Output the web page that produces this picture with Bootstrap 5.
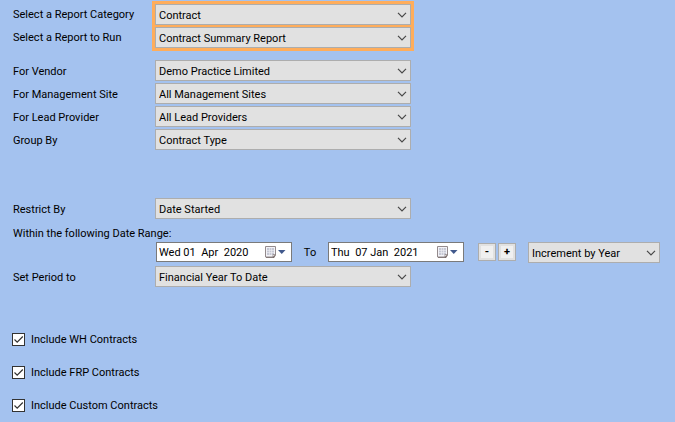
<!DOCTYPE html>
<html lang="en">
<head>
<meta charset="utf-8">
<meta name="viewport" content="width=device-width, initial-scale=1">
<title>Reports</title>
<link href="https://cdn.jsdelivr.net/npm/bootstrap@5.3.0/dist/css/bootstrap.min.css" rel="stylesheet">
<style>
body{background:#a4c2ef;color:#000;font:11px/21px Roboto,"Liberation Sans",sans-serif}
.report-form{padding:1px 13px 8px}
.stack{display:grid;gap:2px}
.caption{flex:0 0 142px;line-height:21px}
label.caption{height:21px;line-height:23px}
.field{flex:0 1 256px;min-width:0}
.highlight{flex:0 1 262px;min-width:0;background:#ffad5b;padding:3px}
.first-group{margin-bottom:9px}
.first-group .caption{flex-basis:139px;padding-top:3px}
.group-gap{margin-bottom:48px}
.form-select{height:21px;padding:2px 20px 0 3px;border:1px solid #adadad;border-radius:0;color:#000;font-size:11px;line-height:17px;background-color:#e1e1e1;background-image:url("data:image/svg+xml,%3Csvg xmlns='http://www.w3.org/2000/svg' viewBox='0 0 10 6'%3E%3Cpath d='M1 .8 5 4.8 9 .8' fill='none' stroke='%23484848' stroke-width='1.2'/%3E%3C/svg%3E");background-size:10px 6px;background-position:right 3px center}
.range-title{padding-top:6px;line-height:17px}
.date-row{margin:0 0 3px 143px;height:21px}
.date-box{flex:0 1 136px;min-width:0;height:20px;background:#fff;border:1px solid #7a7a7a}
.date-box input{flex:1 1 0;min-width:0;border:0;outline:0;padding:0 0 0 2px;height:18px;background:none;color:#000}
.date-box button{flex:none;border:0;background:none;padding:0 5px 0 0;height:18px;line-height:0}
.to-word{flex:0 0 36px;text-align:center}
.steps{margin:1px 12px 0 14px;gap:2px}
.steps button{width:18px;height:18px;padding:0;border:1px solid #adadad;border-radius:0;background:#f0f0f0;box-shadow:inset 0 0 0 2px #e1e1e1;color:#000;font-size:11px;font-weight:700;line-height:16px}
.increment{flex:0 1 132px;min-width:0}
.checks{margin-top:42px;gap:12px}
.checks .form-check{min-height:21px;margin:0;padding:0;display:flex;align-items:center;gap:6px}
.checks .form-check-input{float:none;margin:0 0 0 -1px;width:13px;height:13px;border:1px solid #333;border-radius:0;background-color:#fff}
.checks .form-check-input:checked{border-color:#333;background-color:#fff;background-size:11px 11px;background-image:url("data:image/svg+xml,%3Csvg xmlns='http://www.w3.org/2000/svg' viewBox='0 0 11 11'%3E%3Cpath d='M1.5 5.5 4.2 8.2 9.8 2.5' fill='none' stroke='%23333' stroke-width='1.2'/%3E%3C/svg%3E")}
</style>
<script defer src="https://cdn.jsdelivr.net/npm/bootstrap@5.3.0/dist/js/bootstrap.bundle.min.js"></script>
</head>
<body>
<svg class="d-none" aria-hidden="true">
<symbol id="calendar" viewBox="0 0 21 12">
<path d="M1 1H11V9L9 12H1Z" fill="#776a68"/>
<path d="M.5.5H10.500V8.500L8 11H.5Z" fill="#f3f3f8" stroke="#938a8c"/>
<path d="M2 2H9V9H2Z" fill="#c6c8d4"/>
<path d="M2 4.500H9M2 6.500H9M4.500 2V9M6.500 2V9" stroke="#eeeef4" stroke-width=".6"/>
<path d="M8 11V8.500H10.500Z" fill="#fff" stroke="#776a68" stroke-width=".6"/>
<path d="M13 4H20.500L16.750 8Z" fill="#41598c"/>
</symbol>
</svg>
<form class="report-form">
<div class="first-group d-flex">
<div class="stack caption align-content-start">
<label for="category">Select a Report Category</label>
<label for="report">Select a Report to Run</label>
</div>
<div class="highlight stack">
<select class="form-select" id="category"><option>Contract</option></select>
<select class="form-select" id="report"><option>Contract Summary Report</option></select>
</div>
</div>
<div class="stack group-gap">
<div class="d-flex"><label class="caption" for="vendor">For Vendor</label><div class="field"><select class="form-select" id="vendor"><option>Demo Practice Limited</option></select></div></div>
<div class="d-flex"><label class="caption" for="site">For Management Site</label><div class="field"><select class="form-select" id="site"><option>All Management Sites</option></select></div></div>
<div class="d-flex"><label class="caption" for="lead-provider">For Lead Provider</label><div class="field"><select class="form-select" id="lead-provider"><option>All Lead Providers</option></select></div></div>
<div class="d-flex"><label class="caption" for="group-by">Group By</label><div class="field"><select class="form-select" id="group-by"><option>Contract Type</option></select></div></div>
</div>
<div class="d-flex"><label class="caption" for="restrict">Restrict By</label><div class="field"><select class="form-select" id="restrict"><option>Date Started</option></select></div></div>
<div class="range-title" id="range-title">Within the following Date Range:</div>
<div class="date-row d-flex" role="group" aria-labelledby="range-title">
<div class="date-box d-flex"><input type="text" id="from" aria-label="From date" value="Wed 01  Apr  2020"><button type="button" aria-label="Choose from date"><svg width="21" height="12"><use href="#calendar"/></svg></button></div>
<label class="to-word" for="until">To</label>
<div class="date-box d-flex"><input type="text" id="until" value="Thu  07 Jan  2021"><button type="button" aria-label="Choose to date"><svg width="21" height="12"><use href="#calendar"/></svg></button></div>
<div class="steps d-flex"><button type="button" aria-label="Previous period">-</button><button type="button" aria-label="Next period">+</button></div>
<div class="increment"><select class="form-select" aria-label="Increment"><option>Increment by Year</option></select></div>
</div>
<div class="d-flex"><label class="caption" for="period">Set Period to</label><div class="field"><select class="form-select" id="period"><option>Financial Year To Date</option></select></div></div>
<div class="checks d-grid">
<div class="form-check"><input class="form-check-input" type="checkbox" id="wh" checked><label for="wh">Include WH Contracts</label></div>
<div class="form-check"><input class="form-check-input" type="checkbox" id="frp" checked><label for="frp">Include FRP Contracts</label></div>
<div class="form-check"><input class="form-check-input" type="checkbox" id="custom" checked><label for="custom">Include Custom Contracts</label></div>
</div>
</form>
</body>
</html>
